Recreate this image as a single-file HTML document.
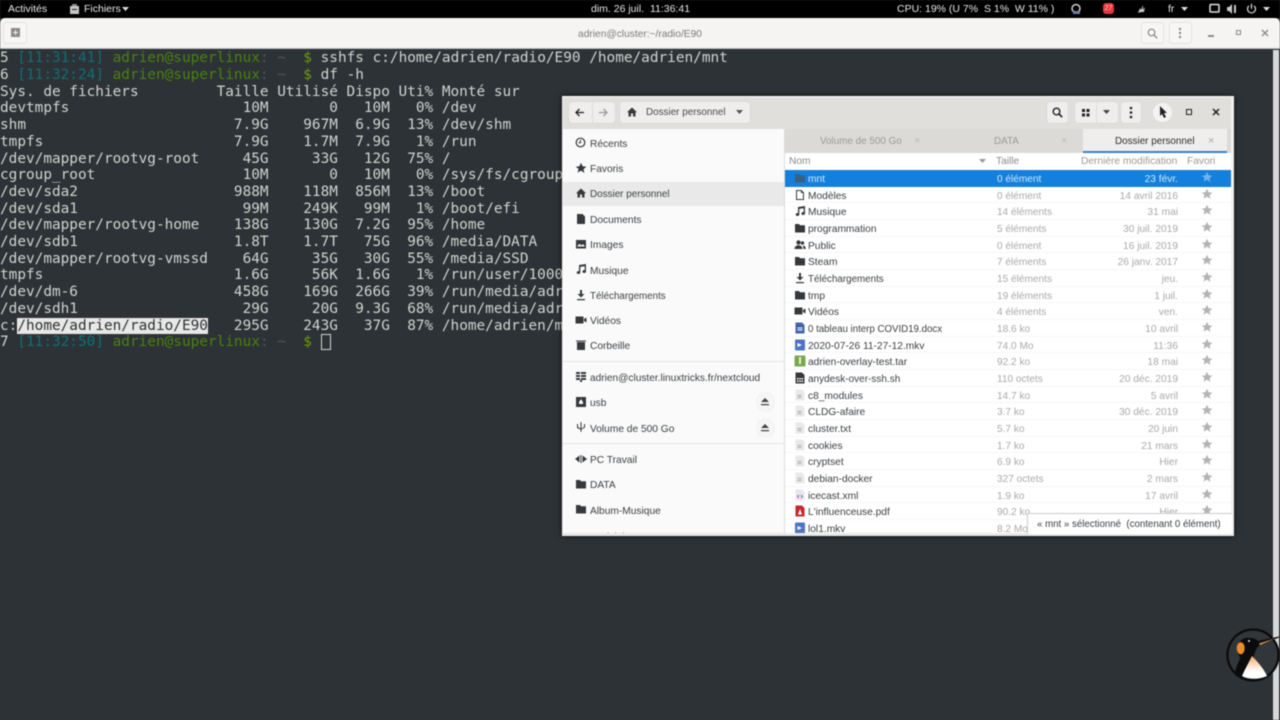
<!DOCTYPE html>
<html lang="fr"><head><meta charset="utf-8"><title>Fichiers</title>
<style>
html,body{margin:0;padding:0;width:1280px;height:720px;overflow:hidden;background:#2d3236}
#root{position:absolute;left:0;top:0;width:1280px;height:720px;overflow:hidden;filter:blur(.45px);font-family:"Liberation Sans",sans-serif}
.a{position:absolute;white-space:nowrap}
#top{left:0;top:0;width:1280px;height:18px;background:#000;color:#e6e6e6;font-size:10.5px;line-height:18px}
#tb{left:0;top:18px;width:1280px;height:31px;background:#f5f4f3;border-radius:5px 5px 0 0;border-bottom:1px solid #bbb;box-sizing:border-box}
#term{left:0;top:49px;width:1280px;height:671px;background:#2d3236}
pre{position:absolute;left:0;margin:0;font-family:"DejaVu Sans Mono","Liberation Mono",monospace;font-size:14.4px;line-height:17px;height:17px;color:#d0d3cf;transform:translateY(1px)}
.t{color:#0e6f78}.g{color:#47820f}.d{color:#50565a}.y{color:#6f9a0c}
#win{left:562px;top:96px;width:672px;height:440px;background:#fff;overflow:hidden;box-shadow:0 0 6px rgba(0,0,0,.6)}
.btn{position:absolute;top:6px;height:21px;background:#efeeec;border-radius:3px;box-shadow:0 0 1px rgba(0,0,0,.18)}
.s{position:absolute;left:28px;font-size:10.2px;line-height:14px;color:#3b3f42;margin-top:2px}
.i{position:absolute;fill:#35393c}
.r{position:absolute;left:223px;width:446px;height:16.67px;border-bottom:1px solid #f6f6f6;box-sizing:border-box}
.r b{position:absolute;left:23px;top:3px;font-weight:normal;font-size:10.2px;line-height:14px;color:#3b3f42;white-space:nowrap}
.r i{position:absolute;left:212px;top:3px;font-style:normal;font-size:10.1px;line-height:14px;color:#a9a9a9;white-space:nowrap}
.r u{position:absolute;right:53px;top:3px;text-decoration:none;font-size:10.2px;line-height:14px;color:#a9a9a9;white-space:nowrap}
.r svg{position:absolute;left:9px;top:2px;width:12px;height:12px}
.r .st{left:416px;top:1px;width:12px;height:12px;fill:#b4b4b4}
.sel{background:#1280dc;border:0}.sel b,.sel i,.sel u{color:#d5e9f8}.sel .st{fill:#6fb3ea}
.h{font-size:9.9px;line-height:14px}
</style></head><body>
<svg width="0" height="0" style="position:absolute"><defs>
<linearGradient id="pg" x1="0" y1="0" x2="0" y2="1"><stop offset="0" stop-color="#f0a860"/><stop offset=".45" stop-color="#fde6d0"/><stop offset=".7" stop-color="#fff"/></linearGradient>
<symbol id="f" viewBox="0 0 12 12"><path d="M1 2h4l1 1.300h5V10.500H1z"/></symbol>
<symbol id="st" viewBox="0 0 12 12"><path d="M6 .8l1.600 3.500 3.800.4-2.900 2.500.9 3.800L6 8.600 2.600 10.600l.9-3.800L.6 4.700l3.800-.4z"/></symbol>
<symbol id="h" viewBox="0 0 12 12"><path d="M6 1.500L11 6.200H9.500V10.500H7V7.500H5v3H2.500V6.200H1z"/></symbol>
<symbol id="doc" viewBox="0 0 12 12"><path d="M2 1h5.500L10 3.500V11H2z"/></symbol>
<symbol id="mus" viewBox="0 0 12 12"><path d="M4 2l7-1v7.500a1.800 1.500 0 1 1-1.300-1.400V3.200L5.300 3.900V9.500a1.800 1.500 0 1 1-1.300-1.400z"/></symbol>
<symbol id="dl" viewBox="0 0 12 12"><path d="M5 1h2v4h2.500L6 8.500 2.500 5H5zM2 10h8v1.200H2z"/></symbol>
<symbol id="vid" viewBox="0 0 12 12"><path d="M.5 2.500h8v7h-8zM9 5l2.500-1.500v5L9 7z"/></symbol>
<symbol id="img" viewBox="0 0 12 12"><path d="M1 2h10v8.500H1zM2 8.500h8L8 6 6.300 7.500 4.500 5.800z" fill-rule="evenodd"/></symbol>
<symbol id="tmpl" viewBox="0 0 12 12"><path d="M2 1h5.500L10 3.500V11H2zM3 2v8h6V4H7V2z" fill-rule="evenodd"/></symbol>
<symbol id="pub" viewBox="0 0 12 12"><circle cx="4.500" cy="3.500" r="2.200"/><circle cx="8.500" cy="4" r="1.700"/><path d="M.5 10c0-2.500 1.800-3.800 4-3.800s4 1.300 4 3.800zM9 6.500c1.500 0 2.700 1 2.700 3.500H9.500z"/></symbol>
<symbol id="w" viewBox="0 0 12 12"><path d="M1.500.5H8L10.500 3V11.500H1.500z" fill="#e9e9e9"/><path d="M3.500 6h4v1h-4zM3.500 8h4v1h-4z" fill="#aaa"/></symbol>
<symbol id="bv" viewBox="0 0 12 12"><rect x="1" y=".5" width="10" height="11" rx="1" fill="#4f74c4"/><path d="M3.500 4l4.500 2-4.500 2z" fill="#fff"/></symbol>
<symbol id="dx" viewBox="0 0 12 12"><path d="M1.500.5H8L10.500 3V11.500H1.500z" fill="#3f63ad"/><path d="M3.500 5.500h5v1h-5zM3.500 7.500h5v1h-5z" fill="#fff"/></symbol>
<symbol id="tar" viewBox="0 0 12 12"><rect x=".5" y=".5" width="11" height="11" rx="1" fill="#7aa84c"/><rect x="5" y="2" width="2" height="7" fill="#e8f2d8"/></symbol>
<symbol id="sh" viewBox="0 0 12 12"><path d="M1.500.5H8L10.500 3V11.500H1.500z" fill="#35393c"/><path d="M3 6h1.500v1.500H3zM5.300 6h1.500v1.500H5.300zM7.500 6H9v1.500H7.500zM3 8.500h1.500V10H3zM5.300 8.500h1.500V10H5.300zM7.500 8.500H9V10H7.500z" fill="#fff"/></symbol>
<symbol id="xml" viewBox="0 0 12 12"><path d="M1.500.5H8L10.500 3V11.500H1.500z" fill="#ebe6ee"/><path d="M5 6L3.500 7.500 5 9M7 6l1.500 1.500L7 9" fill="none" stroke="#8a70a8"/></symbol>
<symbol id="pdf" viewBox="0 0 12 12"><path d="M1.500.5H8L10.500 3V11.500H1.500z" fill="#c8282d"/><path d="M4 9.500L6 4l2 5.500z" fill="#fff"/></symbol>
</defs></svg>
<div id="root">
<div id="top" class="a">
<span class="a" style="left:8px">Activités</span>
<svg class="a" style="left:69px;top:3px" width="11" height="12"><path d="M1 3h9v8H1z" fill="#c6c6c6"/><path d="M3 1h5v2H3z" fill="#888"/><path d="M3 6h5v1H3z" fill="#222"/></svg>
<span class="a" style="left:84px">Fichiers</span>
<svg class="a" style="left:122px;top:7px" width="7" height="5"><path d="M0 0h7L3.500 4z" fill="#ddd"/></svg>
<span class="a" style="left:591px">dim. 26 juil.&nbsp; 11:36:41</span>
<span class="a" style="left:897px;word-spacing:0">CPU: 19% (U 7%&nbsp; S 1%&nbsp; W 11% )</span>
<svg class="a" style="left:1070px;top:3px" width="12" height="12"><circle cx="6" cy="5.500" r="4" fill="none" stroke="#ccc" stroke-width="1.500"/><rect x="3" y="8" width="7" height="3" fill="#6a7fa8"/></svg>
<div class="a" style="left:1103px;top:3px;width:11px;height:11px;background:#e0393e;border-radius:3px;color:#f5c9c9;font-size:7px;line-height:11px;text-align:center">27</div>
<svg class="a" style="left:1137px;top:4px" width="9" height="10"><path d="M1 9L3 4l1 2 2-5v5l2-3-1 5H4z" fill="#ccc"/></svg>
<span class="a" style="left:1168px">fr</span>
<svg class="a" style="left:1181px;top:7px" width="7" height="5"><path d="M0 0h7L3.500 4z" fill="#ddd"/></svg>
<svg class="a" style="left:1209px;top:3px" width="11" height="11"><rect x="1" y="1.500" width="9" height="7.500" rx="1" fill="none" stroke="#e0e0e0" stroke-width="1.500"/></svg>
<svg class="a" style="left:1227px;top:4px" width="11" height="10"><path d="M0 3h2l3-3v10L2 7H0zM7 1h2v8H7z" fill="#c8c8c8"/></svg>
<svg class="a" style="left:1246px;top:3px" width="11" height="11"><path d="M3 2.800a4 4 0 1 0 5 0M5.500 .8v5" fill="none" stroke="#ddd" stroke-width="1.200"/></svg>
<svg class="a" style="left:1263px;top:7px" width="7" height="5"><path d="M0 0h7L3.500 4z" fill="#ddd"/></svg>
</div>
<div id="tb" class="a">
<div class="a" style="left:3px;top:4px;width:22px;height:20px;background:#f7f6f5;border:1px solid #e2e2e0;border-radius:3px"></div>
<svg class="a" style="left:11px;top:10px" width="9" height="9"><path d="M0 0h9v9H0z" fill="#8b8b8b"/><path d="M4 2h1v2h2v1H5v2H4V5H2V4h2z" fill="#eee"/></svg>
<div class="a" style="left:0;width:1280px;top:2px;text-align:center;line-height:29px;font-size:10.2px;color:#7c7c7c">adrien@cluster:~/radio/E90</div>
<div class="a" style="left:1141px;top:4px;width:21px;height:20px;border:1px solid #e2e2e0;border-radius:3px;background:#f7f6f5"></div>
<svg class="a" style="left:1147px;top:10px" width="11" height="11"><circle cx="4.500" cy="4.500" r="3.300" fill="none" stroke="#8a8a8a" stroke-width="1.200"/><path d="M7 7l3.200 3.200" stroke="#8a8a8a" stroke-width="1.400"/></svg>
<div class="a" style="left:1169px;top:4px;width:21px;height:20px;border:1px solid #e2e2e0;border-radius:3px;background:#f7f6f5"></div>
<svg class="a" style="left:1178px;top:9px" width="4" height="12"><circle cx="2" cy="2" r="1.200" fill="#888"/><circle cx="2" cy="6" r="1.200" fill="#888"/><circle cx="2" cy="10" r="1.200" fill="#888"/></svg>
<div class="a" style="left:1208px;top:17px;width:6px;height:1.500px;background:#8a8a8a"></div>
<div class="a" style="left:1236px;top:12px;width:3px;height:3px;border:1.300px solid #8a8a8a"></div>
<svg class="a" style="left:1261px;top:11px" width="8" height="8"><path d="M1 1l6 6M7 1L1 7" stroke="#8a8a8a" stroke-width="1.300"/></svg>
</div>
<div id="term" class="a"></div>
<div class="a" style="left:1273px;top:50px;width:6px;height:670px;background:#d6d8d9"></div>
<pre style="top:49px"><span>5 </span><span class="t">[11:31:41]</span> <span class="g">adrien@superlinux</span><span class="d">:</span> <span class="d">~</span>  <span class="y">$</span> sshfs c:/home/adrien/radio/E90 /home/adrien/mnt</pre>
<pre style="top:66px">6 <span class="t">[11:32:24]</span> <span class="g">adrien@superlinux</span><span class="d">:</span> <span class="d">~</span>  <span class="y">$</span> df -h</pre>
<pre style="top:82.700px">Sys. de fichiers         Taille Utilisé Dispo Uti% Monté sur</pre>
<pre style="top:99.400px">devtmpfs                    10M       0   10M   0% /dev</pre>
<pre style="top:116.100px">shm                        7.9G    967M  6.9G  13% /dev/shm</pre>
<pre style="top:132.800px">tmpfs                      7.9G    1.7M  7.9G   1% /run</pre>
<pre style="top:149.500px">/dev/mapper/rootvg-root     45G     33G   12G  75% /</pre>
<pre style="top:166.200px">cgroup_root                 10M       0   10M   0% /sys/fs/cgroup</pre>
<pre style="top:182.900px">/dev/sda2                  988M    118M  856M  13% /boot</pre>
<pre style="top:199.600px">/dev/sda1                   99M    249K   99M   1% /boot/efi</pre>
<pre style="top:216.300px">/dev/mapper/rootvg-home    138G    130G  7.2G  95% /home</pre>
<pre style="top:233px">/dev/sdb1                  1.8T    1.7T   75G  96% /media/DATA</pre>
<pre style="top:249.700px">/dev/mapper/rootvg-vmssd    64G     35G   30G  55% /media/SSD</pre>
<pre style="top:266.400px">tmpfs                      1.6G     56K  1.6G   1% /run/user/1000</pre>
<pre style="top:283.100px">/dev/dm-6                  458G    169G  266G  39% /run/media/adrien</pre>
<pre style="top:299.800px">/dev/sdh1                   29G     20G  9.3G  68% /run/media/adrien</pre>
<pre style="top:316.500px">c:<span style="background:#e8e8e6;color:#2d3236">/home/adrien/radio/E90</span>   295G    243G   37G  87% /home/adrien/mnt</pre>
<pre style="top:333.200px">7 <span class="t">[11:32:50]</span> <span class="g">adrien@superlinux</span><span class="d">:</span> <span class="d">~</span>  <span class="y">$</span> </pre>
<div class="a" style="left:321px;top:334px;width:8px;height:14px;border:1px solid #d3d7cf"></div>

<div id="win" class="a">
<div class="a" style="left:0;top:0;width:672px;height:33px;background:#e1dfdc;border-top:1px solid #fff;box-sizing:border-box"></div>
<div class="btn" style="left:7px;width:46px"></div>
<div class="a" style="left:30px;top:6px;width:1px;height:21px;background:#ddd"></div>
<svg class="a" style="left:12px;top:11px" width="11" height="11"><path d="M10 5.500H2M5.500 2L2 5.500 5.500 9" fill="none" stroke="#222" stroke-width="1.300"/></svg>
<svg class="a" style="left:36px;top:11px" width="11" height="11"><path d="M1 5.500H9M5.500 2L9 5.500 5.500 9" fill="none" stroke="#999" stroke-width="1.300"/></svg>
<div class="btn" style="left:58px;width:130px"></div>
<svg class="a" style="left:64px;top:10px;fill:#3a3a3a" width="12" height="12"><use href="#h"/></svg>
<span class="a h" style="left:84px;top:10px;color:#4a4a4a">Dossier personnel</span>
<svg class="a" style="left:174px;top:14px" width="7" height="5"><path d="M0 0h7L3.500 4z" fill="#555"/></svg>
<div class="btn" style="left:485px;width:21px"></div>
<svg class="a" style="left:490px;top:11px" width="11" height="11"><circle cx="4.500" cy="4.500" r="3.300" fill="none" stroke="#222" stroke-width="1.400"/><path d="M7 7l3.200 3.200" stroke="#222" stroke-width="1.700"/></svg>
<div class="btn" style="left:513px;width:43px"></div>
<div class="a" style="left:534px;top:6px;width:1px;height:21px;background:#ddd"></div>
<svg class="a" style="left:519px;top:12px" width="9" height="9"><path d="M1 1h3v3H1zM5.500 1h3v3h-3zM1 5.500h3v3H1zM5.500 5.500h3v3h-3z" fill="#222"/></svg>
<svg class="a" style="left:541px;top:14px" width="7" height="5"><path d="M0 0h7L3.500 4z" fill="#444"/></svg>
<div class="btn" style="left:559px;width:20px"></div>
<svg class="a" style="left:567px;top:10px" width="4" height="13"><circle cx="2" cy="2" r="1.300" fill="#222"/><circle cx="2" cy="6.500" r="1.300" fill="#222"/><circle cx="2" cy="11" r="1.300" fill="#222"/></svg>
<div class="a" style="left:591px;top:7px;width:19px;height:19px;border-radius:50%;background:#f4f3f2"></div>
<svg class="a" style="left:597px;top:9px" width="10" height="15"><path d="M1 1l7 7H5l2 4-2 1-2-4-2 2z" fill="#222"/></svg>
<div class="a" style="left:624px;top:13px;width:4px;height:4px;border:1.500px solid #222"></div>
<svg class="a" style="left:650px;top:12px" width="8" height="8"><path d="M1 1l6 6M7 1L1 7" stroke="#222" stroke-width="1.500"/></svg>

<div class="a" style="left:1px;top:33px;width:222px;height:406px;background:#fafafa;overflow:hidden"></div>
<div class="a" style="left:222px;top:33px;width:1px;height:407px;background:#dcdcdc"></div>
<div class="a" style="left:1px;top:86px;width:221px;height:24px;background:#e9e9e9"></div>
<svg class="i" style="left:13px;top:41px" width="11" height="11"><circle cx="5.500" cy="5.500" r="4.300" fill="none" stroke="#333" stroke-width="1.200"/><path d="M5.500 3v2.800H3.500" fill="none" stroke="#333"/></svg><span class="s" style="top:40px">Récents</span>
<svg class="i" style="left:13px;top:66px" width="12" height="12"><use href="#st"/></svg><span class="s" style="top:65px">Favoris</span>
<svg class="i" style="left:13px;top:91px" width="12" height="12"><use href="#h"/></svg><span class="s" style="top:90px;font-size:9.900px">Dossier personnel</span>
<svg class="i" style="left:13px;top:117px" width="12" height="12"><use href="#doc"/></svg><span class="s" style="top:116px">Documents</span>
<svg class="i" style="left:13px;top:142px" width="12" height="12"><use href="#img"/></svg><span class="s" style="top:141px">Images</span>
<svg class="i" style="left:13px;top:167px" width="12" height="12"><use href="#mus"/></svg><span class="s" style="top:166.500px">Musique</span>
<svg class="i" style="left:13px;top:193px" width="12" height="12"><use href="#dl"/></svg><span class="s" style="top:192px;font-size:9.800px">Téléchargements</span>
<svg class="i" style="left:13px;top:218px" width="12" height="12"><use href="#vid"/></svg><span class="s" style="top:217px">Vidéos</span>
<svg class="i" style="left:13px;top:243px" width="12" height="12"><path d="M2 3h8v8H2zM1 1.500h10V2.500H1z"/></svg><span class="s" style="top:242px">Corbeille</span>
<div class="a" style="left:1px;top:265px;width:221px;height:1px;background:#e4e4e4"></div>
<svg class="i" style="left:13px;top:275px" width="12" height="12"><path d="M1 1h4v2H1zM6 1h5v2H6zM1 4h4v2H1zM6 4h5v2H6zM1 7h4v2H1zM6 7h5v2H6zM5 9h2v2H5z"/></svg><span class="s" style="top:274px;font-size:10.150px">adrien@cluster.linuxtricks.fr/nextcloud</span>
<svg class="i" style="left:13px;top:300px" width="12" height="12"><path d="M1 1h10v10H1zM6 3L4 6v2h4V6z" fill-rule="evenodd"/></svg><span class="s" style="top:299px">usb</span>
<svg class="i" style="left:13px;top:325px" width="12" height="12"><path d="M5.500 1h1v9.500a.5.500 0 1 1-1 0zM2 3h1v3l2.500 1.500V8.500L2 7zM9 3h1v3.500L6.500 8.500V7.500L9 6z"/></svg><span class="s" style="top:324.500px">Volume de 500 Go</span>
<div class="a" style="left:195px;top:297px;width:17px;height:18px;border-radius:50%;background:#f6f6f6;box-shadow:0 0 1px #ccc"></div>
<svg class="a" style="left:199px;top:302px" width="8" height="8"><path d="M0 4L4 0l4 4zM0 6h8v1.300H0z" fill="#444"/></svg>
<div class="a" style="left:195px;top:323px;width:17px;height:18px;border-radius:50%;background:#f6f6f6;box-shadow:0 0 1px #ccc"></div>
<svg class="a" style="left:199px;top:328px" width="8" height="8"><path d="M0 4L4 0l4 4zM0 6h8v1.300H0z" fill="#444"/></svg>
<div class="a" style="left:1px;top:347px;width:221px;height:1px;background:#e4e4e4"></div>
<svg class="i" style="left:13px;top:357px" width="12" height="12"><path d="M4.500 2.500v7L0 6zM7.500 2.500L12 6 7.500 9.500zM5.500 2h1v8h-1z"/></svg><span class="s" style="top:356px">PC Travail</span>
<svg class="i" style="left:13px;top:382px" width="12" height="12"><use href="#f"/></svg><span class="s" style="top:381px">DATA</span>
<svg class="i" style="left:13px;top:407px" width="12" height="12"><use href="#f"/></svg><span class="s" style="top:406.500px">Album-Musique</span>
<span class="s" style="top:433px">Logiciels</span>

<div class="a" style="left:223px;top:33px;width:446px;height:24px;background:#dcdad7"></div>
<span class="a h" style="left:258px;top:39px;color:#9a9a98">Volume de 500 Go</span>
<span class="a" style="left:352px;top:38px;font-size:11px;line-height:14px;color:#bdbcba">×</span>
<span class="a h" style="left:432px;top:39px;color:#9a9a98">DATA</span>
<span class="a" style="left:499px;top:38px;font-size:11px;line-height:14px;color:#bdbcba">×</span>
<div class="a" style="left:521px;top:33px;width:144px;height:22px;background:#efeeec;border-bottom:2px solid #3a7fc4"></div>
<span class="a h" style="left:553px;top:39px;color:#2e2e2e">Dossier personnel</span>
<span class="a" style="left:646px;top:38px;font-size:11px;line-height:14px;color:#a8a8a8">×</span>
<div class="a" style="left:223px;top:57px;width:446px;height:17px;background:#fff"></div>
<span class="a" style="left:227px;top:59px;font-size:10.200px;line-height:14px;color:#8a8a8a">Nom</span>
<svg class="a" style="left:417px;top:63px" width="7" height="4"><path d="M0 0h7L3.500 4z" fill="#999"/></svg>
<span class="a" style="left:434px;top:59px;font-size:10.200px;line-height:14px;color:#8a8a8a">Taille</span>
<span class="a" style="left:519px;top:59px;font-size:10.200px;line-height:14px;color:#9a9a9a">Dernière modification</span>
<span class="a" style="left:625px;top:59px;font-size:10.200px;line-height:14px;color:#9a9a9a">Favori</span>

<div class="r sel" style="top:74px"><svg fill="#3a5f85"><use href="#f"/></svg><b>mnt</b><i>0 élément</i><u>23 févr.</u><svg class="st"><use href="#st"/></svg></div>
<div class="r" style="top:90.670px"><svg fill="#35393c"><use href="#tmpl"/></svg><b>Modèles</b><i>0 élément</i><u>14 avril 2016</u><svg class="st"><use href="#st"/></svg></div>
<div class="r" style="top:107.330px"><svg fill="#35393c"><use href="#mus"/></svg><b>Musique</b><i>14 éléments</i><u>31 mai</u><svg class="st"><use href="#st"/></svg></div>
<div class="r" style="top:124px"><svg fill="#35393c"><use href="#f"/></svg><b>programmation</b><i>5 éléments</i><u>30 juil. 2019</u><svg class="st"><use href="#st"/></svg></div>
<div class="r" style="top:140.670px"><svg fill="#35393c"><use href="#pub"/></svg><b>Public</b><i>0 élément</i><u>16 juil. 2019</u><svg class="st"><use href="#st"/></svg></div>
<div class="r" style="top:157.330px"><svg fill="#35393c"><use href="#f"/></svg><b>Steam</b><i>7 éléments</i><u>26 janv. 2017</u><svg class="st"><use href="#st"/></svg></div>
<div class="r" style="top:174px"><svg fill="#35393c"><use href="#dl"/></svg><b style="font-size:9.800px">Téléchargements</b><i>15 éléments</i><u>jeu.</u><svg class="st"><use href="#st"/></svg></div>
<div class="r" style="top:190.670px"><svg fill="#35393c"><use href="#f"/></svg><b>tmp</b><i>19 éléments</i><u>1 juil.</u><svg class="st"><use href="#st"/></svg></div>
<div class="r" style="top:207.330px"><svg fill="#35393c"><use href="#vid"/></svg><b>Vidéos</b><i>4 éléments</i><u>ven.</u><svg class="st"><use href="#st"/></svg></div>
<div class="r" style="top:224px"><svg><use href="#dx"/></svg><b style="font-size:9.700px">0 tableau interp COVID19.docx</b><i>18.6 ko</i><u>10 avril</u><svg class="st"><use href="#st"/></svg></div>
<div class="r" style="top:240.670px"><svg><use href="#bv"/></svg><b>2020-07-26 11-27-12.mkv</b><i>74.0 Mo</i><u>11:36</u><svg class="st"><use href="#st"/></svg></div>
<div class="r" style="top:257.330px"><svg><use href="#tar"/></svg><b>adrien-overlay-test.tar</b><i>92.2 ko</i><u>18 mai</u><svg class="st"><use href="#st"/></svg></div>
<div class="r" style="top:274px"><svg><use href="#sh"/></svg><b style="font-size:10px">anydesk-over-ssh.sh</b><i>110 octets</i><u>20 déc. 2019</u><svg class="st"><use href="#st"/></svg></div>
<div class="r" style="top:290.670px"><svg><use href="#w"/></svg><b>c8_modules</b><i>14.7 ko</i><u>5 avril</u><svg class="st"><use href="#st"/></svg></div>
<div class="r" style="top:307.330px"><svg><use href="#w"/></svg><b>CLDG-afaire</b><i>3.7 ko</i><u>30 déc. 2019</u><svg class="st"><use href="#st"/></svg></div>
<div class="r" style="top:324px"><svg><use href="#w"/></svg><b>cluster.txt</b><i>5.7 ko</i><u>20 juin</u><svg class="st"><use href="#st"/></svg></div>
<div class="r" style="top:340.670px"><svg><use href="#w"/></svg><b>cookies</b><i>1.7 ko</i><u>21 mars</u><svg class="st"><use href="#st"/></svg></div>
<div class="r" style="top:357.330px"><svg><use href="#w"/></svg><b>cryptset</b><i>6.9 ko</i><u>Hier</u><svg class="st"><use href="#st"/></svg></div>
<div class="r" style="top:374px"><svg><use href="#w"/></svg><b>debian-docker</b><i>327 octets</i><u>2 mars</u><svg class="st"><use href="#st"/></svg></div>
<div class="r" style="top:390.670px"><svg><use href="#xml"/></svg><b>icecast.xml</b><i>1.9 ko</i><u>17 avril</u><svg class="st"><use href="#st"/></svg></div>
<div class="r" style="top:407.330px"><svg><use href="#pdf"/></svg><b>L'influenceuse.pdf</b><i>90.2 ko</i><u>Hier</u><svg class="st"><use href="#st"/></svg></div>
<div class="r" style="top:424px;border:0"><svg><use href="#bv"/></svg><b>lol1.mkv</b><i>8.2 Mo</i></div>
<div class="a" style="left:669px;top:0;width:3px;height:440px;background:#f0f0f0"></div>
<div class="a" style="left:0;top:437px;width:672px;height:3px;background:#e8e8e8"></div>
<div class="a" style="left:465px;top:417px;width:195px;height:20px;background:#fff;border-left:1px solid #ccc;border-top:1px solid #ccc;font-size:9.700px;line-height:22px;color:#3b3f42;padding-left:9px;box-sizing:content-box">« mnt » sélectionné&nbsp;&nbsp;(contenant 0 élément)</div>
<div class="a" style="left:0;top:0;width:1px;height:440px;background:#eee"></div>
</div>

<svg class="a" style="left:1222px;top:625px" width="58" height="60" viewBox="0 0 58 60">
<circle cx="31" cy="30" r="25.500" fill="#31363a" stroke="#0a0a0a" stroke-width="2.200"/>
<path d="M16 20C18 14 24 12 28 13C32 13 34 14 36 16L57 11.500V12.500L38 20C35 22 33 26 32 31L20 53L13 50C13 42 18 36 18 32C15 29 15 24 16 20Z" fill="#0b0b0b"/>
<path d="M30 31C35 36 42 44 45 51C38 54.500 26 54.500 20 51C23 44 27 37 30 31Z" fill="url(#pg)"/>
<ellipse cx="18.700" cy="23.300" rx="4" ry="6" fill="#ee8b2a"/>
<path d="M37 18.500L54 13L38 20Z" fill="#e2a15a"/>
<circle cx="27" cy="16" r="1" fill="#eee"/>
</svg>
</div>
</body></html>
